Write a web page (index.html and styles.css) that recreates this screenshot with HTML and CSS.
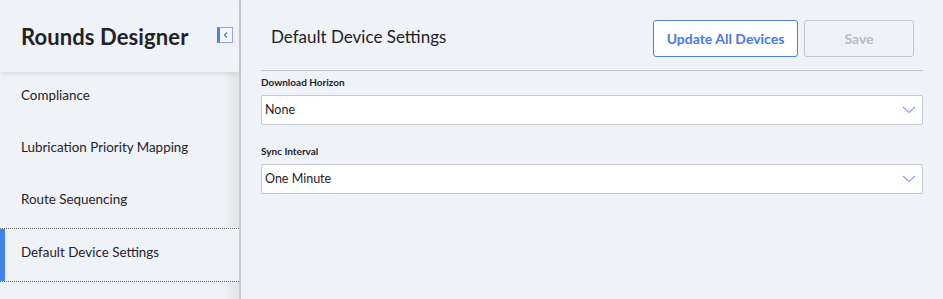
FILE: index.html
```html
<!DOCTYPE html>
<html>
<head>
<meta charset="utf-8">
<link rel="stylesheet" href="styles.css">
</head>
<body>
<div class="app">
  <aside class="sidebar">
    <div class="side-head">
      <h1 class="side-title">Rounds Designer</h1>
      <button class="collapse" aria-label="Collapse">
        <svg width="8" height="8" viewBox="0 0 8 8"><path d="M5 1.5 L2.5 4 L5 6.5" fill="none" stroke="#4a7fe0" stroke-width="1.4"/></svg>
      </button>
    </div>
    <nav class="side-nav">
      <div class="nav-item">Compliance</div>
      <div class="nav-item">Lubrication Priority Mapping</div>
      <div class="nav-item">Route Sequencing</div>
      <div class="nav-item active">Default Device Settings</div>
    </nav>
  </aside>
  <main class="main">
    <header class="main-head">
      <h2 class="main-title">Default Device Settings</h2>
      <div class="actions">
        <button class="btn btn-primary">Update All Devices</button>
        <button class="btn btn-disabled">Save</button>
      </div>
    </header>
    <div class="form">
      <div class="field">
        <label class="field-label">Download Horizon</label>
        <div class="select"><span>None</span>
          <svg class="chev" width="14" height="8" viewBox="0 0 14 8"><path d="M1 1 L7 6.5 L13 1" fill="none" stroke="#8f9ff0" stroke-width="1.2"/></svg>
        </div>
      </div>
      <div class="field">
        <label class="field-label">Sync Interval</label>
        <div class="select"><span>One Minute</span>
          <svg class="chev" width="14" height="8" viewBox="0 0 14 8"><path d="M1 1 L7 6.5 L13 1" fill="none" stroke="#8f9ff0" stroke-width="1.2"/></svg>
        </div>
      </div>
    </div>
  </main>
</div>
</body>
</html>
```
FILE: styles.css
```css
* { box-sizing: border-box; }
html, body { margin: 0; padding: 0; }
body {
  background: #eff2f6;
  font-family: "Lato", "Open Sans", sans-serif;
  color: #1f2329;
  width: 943px;
  height: 299px;
  overflow: hidden;
}
.app {
  display: flex;
  height: 299px;
}
.sidebar {
  width: 241px;
  flex: none;
  border-right: 2px solid #c9cbcf;
  display: flex;
  flex-direction: column;
  background: #eff2f6;
}
.side-head {
  height: 72px;
  display: flex;
  align-items: center;
  justify-content: space-between;
  padding: 0 6px 0 21px;
  box-shadow: 0 3px 4px rgba(0,0,0,0.08);
  position: relative;
  z-index: 1;
}
.side-title {
  margin: 0;
  font-size: 22px;
  font-weight: 700;
  color: #1f2329;
  letter-spacing: 0.1px;
}
.collapse {
  width: 16px;
  height: 16px;
  padding: 0;
  margin-top: -2px;
  border: 1px solid #8fa7ef;
  border-left: 3px solid #4d7fe8;
  background: #f6f8fc;
  display: flex;
  align-items: center;
  justify-content: center;
}
.side-nav {
  flex: 1;
  display: flex;
  flex-direction: column;
  background: linear-gradient(to right, #eff2f6 0, #eff2f6 222px, #e2e4e7 239px);
}
.nav-item {
  height: 52px;
  display: flex;
  align-items: center;
  padding: 0 0 6px 21px;
  font-size: 13.4px;
  color: #1f2329;
}
.nav-item.active {
  border-top: 1px dotted #666;
  border-bottom: 1px dotted #666;
  box-shadow: inset 5px 0 0 #4383e8;
  background: #eff2f6;
  height: 54px;
}
.main {
  flex: 1;
  padding: 0 20px 0 20px;
}
.main-head {
  height: 71px;
  border-bottom: 1px solid #c3c5c9;
  display: flex;
  align-items: flex-start;
  justify-content: space-between;
  padding: 20px 9px 0 10px;
}
.main-title {
  margin: 6px 0 0 0;
  font-size: 17px;
  font-weight: 400;
  color: #1f2329;
}
.actions {
  display: flex;
  gap: 6px;
}
.btn {
  height: 37px;
  font-family: inherit;
  font-size: 14px;
  font-weight: 700;
  border-radius: 3px;
  background: #fff;
  padding: 0 0 1px 0;
}
.btn-primary {
  width: 145px;
  border: 1px solid #4a82e6;
  color: #4a79e0;
}
.btn-disabled {
  width: 110px;
  border: 1px solid #c4c8cd;
  background: #eff2f6;
  color: #b7bcc3;
}
.form {
  padding-top: 5px;
}
.field {
  margin-bottom: 20px;
}
.field-label {
  display: block;
  font-size: 10px;
  font-weight: 700;
  color: #1f2329;
  margin-bottom: 7px;
}
.select {
  height: 30px;
  background: #fff;
  border: 1px solid #c6c8cb;
  border-radius: 2px;
  display: flex;
  align-items: center;
  justify-content: space-between;
  padding: 0 6px 2px 3px;
  font-size: 12.5px;
  color: #1f2329;
}
.chev { margin-top: 2px; }
```
